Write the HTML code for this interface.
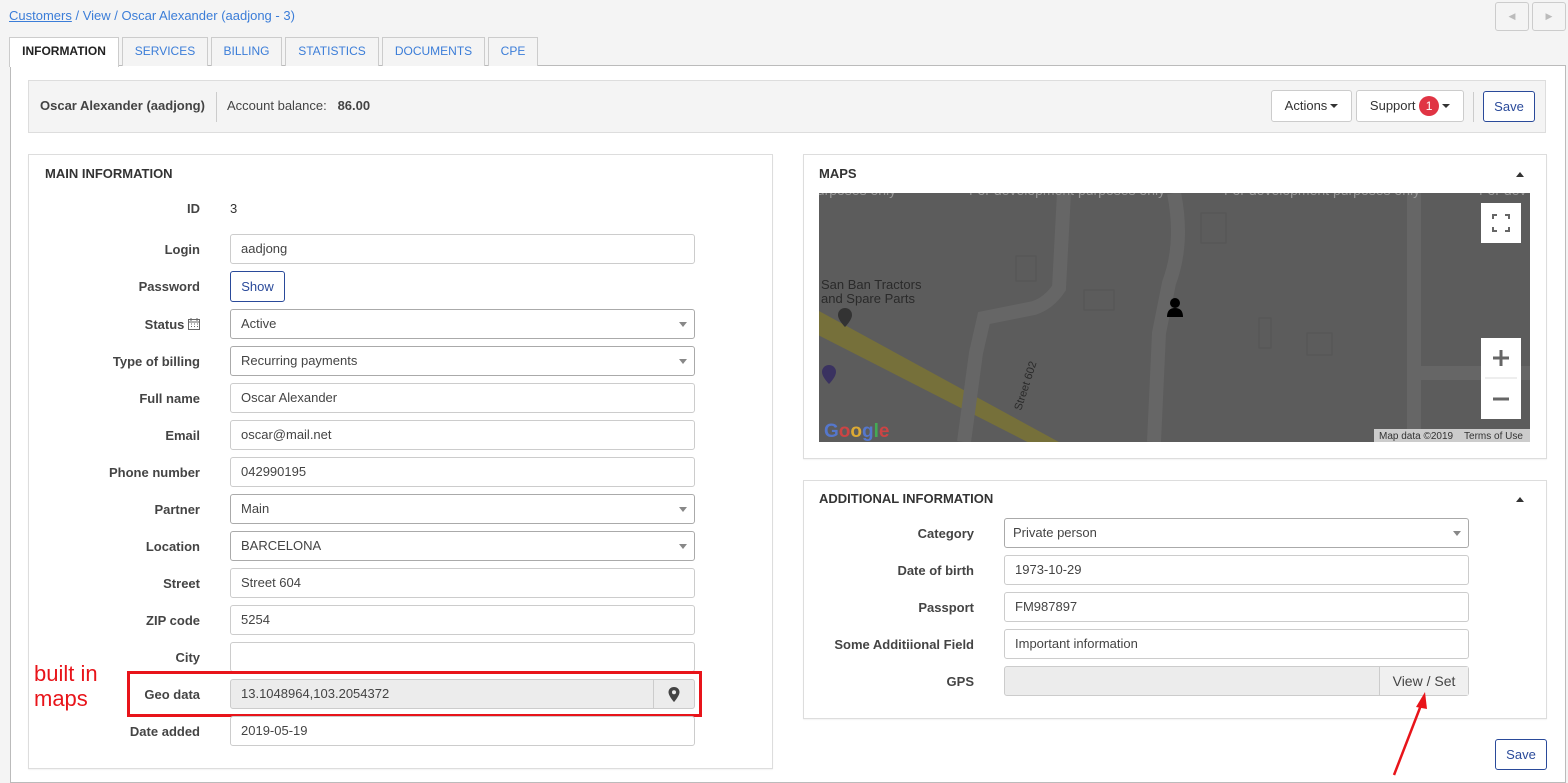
<!DOCTYPE html>
<html><head><meta charset="utf-8"><style>
*{box-sizing:border-box;margin:0;padding:0}
body{width:1568px;height:783px;background:#f4f4f4;font-family:"Liberation Sans",sans-serif;font-size:13px;color:#333;position:relative;overflow:hidden}
.a{position:absolute}
.tab{position:absolute;top:37px;height:29px;border:1px solid #ccc;border-bottom:none;background:#f4f4f4;color:#3b7dd8;font-size:12px;line-height:27px;text-align:center}
.lbl{position:absolute;font-weight:bold;color:#444;text-align:right;width:200px}
.inp{position:absolute;height:30px;border:1px solid #ccc;border-radius:3px;background:#fff;padding-left:10px;line-height:28px;color:#444}
.sel{border-color:#aaa}
.sel:after{content:"";position:absolute;right:7px;top:12px;border:4px solid transparent;border-top:5px solid #888}
.btn{position:absolute;border:1px solid #ccc;border-radius:3px;background:#fff;text-align:center}
.panel{position:absolute;background:#fff;border:1px solid #ddd;box-shadow:0 1px 1px rgba(0,0,0,.05)}
.ph{position:absolute;font-weight:bold;font-size:13px;color:#333}
.caret{display:inline-block;border:4px solid transparent;border-top:4px solid #333;vertical-align:-2px;margin-left:3px}
</style></head><body>
<div class="a" style="left:9px;top:8px;color:#3b7dd8;font-size:13px"><u>Customers</u> / View / Oscar Alexander (aadjong - 3)</div>
<div class="btn" style="left:1495px;top:2px;width:34px;height:29px;background:#f4f4f4;color:#bbb;font-size:9px;line-height:27px">◀</div>
<div class="btn" style="left:1532px;top:2px;width:34px;height:29px;background:#f4f4f4;color:#bbb;font-size:9px;line-height:27px">▶</div>
<div class="a" style="left:10px;top:65px;width:1556px;height:718px;background:#fff;border:1px solid #bbb"></div>
<div class="tab" style="left:9px;width:110px;background:#fff;color:#222;font-weight:bold;height:30px">INFORMATION</div>
<div class="tab" style="left:122px;width:86px">SERVICES</div>
<div class="tab" style="left:211px;width:71px">BILLING</div>
<div class="tab" style="left:285px;width:94px">STATISTICS</div>
<div class="tab" style="left:382px;width:103px">DOCUMENTS</div>
<div class="tab" style="left:488px;width:50px">CPE</div>
<div class="a" style="left:28px;top:80px;width:1518px;height:53px;background:#f4f4f4;border:1px solid #ddd"></div>
<div class="a" style="left:40px;top:98px;font-weight:bold;color:#444">Oscar Alexander (aadjong)</div>
<div class="a" style="left:216px;top:92px;width:1px;height:30px;background:#ccc"></div>
<div class="a" style="left:227px;top:98px;color:#444">Account balance: &nbsp; <b>86.00</b></div>
<div class="btn" style="left:1271px;top:90px;width:81px;height:32px;line-height:30px">Actions<span class="caret"></span></div>
<div class="btn" style="left:1356px;top:90px;width:108px;height:32px;line-height:30px">Support <span style="display:inline-block;width:20px;height:20px;border-radius:10px;background:#e03444;color:#fff;line-height:20px;font-size:12px">1</span><span class="caret"></span></div>
<div class="a" style="left:1473px;top:92px;width:1px;height:30px;background:#ccc"></div>
<div class="btn" style="left:1483px;top:91px;width:52px;height:31px;line-height:29px;border-color:#2a4a9a;color:#2a4a9a">Save</div>

<div class="panel" style="left:28px;top:154px;width:745px;height:615px"></div>
<div class="ph" style="left:45px;top:166px">MAIN INFORMATION</div>
<div class="lbl" style="top:201px">ID</div><div class="a" style="left:230px;top:201px">3</div>
<div class="lbl" style="top:242px">Login</div><div class="inp" style="left:230px;top:234px;width:465px">aadjong</div>
<div class="lbl" style="top:279px">Password</div><div class="btn" style="left:230px;top:271px;width:55px;height:31px;line-height:29px;border-color:#2a4a9a;color:#2a4a9a">Show</div>
<div class="lbl" style="top:317px">Status <svg width="12" height="12" viewBox="0 0 12 12" style="vertical-align:-1px"><rect x="0.5" y="1.5" width="11" height="10" fill="none" stroke="#666"/><path d="M0.5 4h11M3 0v3M9 0v3M3 6h1M6 6h1M9 6h1M3 8.5h1M6 8.5h1M9 8.5h1" stroke="#666"/></svg></div><div class="inp sel" style="left:230px;top:309px;width:465px">Active</div>
<div class="lbl" style="top:354px">Type of billing</div><div class="inp sel" style="left:230px;top:346px;width:465px">Recurring payments</div>
<div class="lbl" style="top:391px">Full name</div><div class="inp" style="left:230px;top:383px;width:465px">Oscar Alexander</div>
<div class="lbl" style="top:428px">Email</div><div class="inp" style="left:230px;top:420px;width:465px">oscar@mail.net</div>
<div class="lbl" style="top:465px">Phone number</div><div class="inp" style="left:230px;top:457px;width:465px">042990195</div>
<div class="lbl" style="top:502px">Partner</div><div class="inp sel" style="left:230px;top:494px;width:465px">Main</div>
<div class="lbl" style="top:539px">Location</div><div class="inp sel" style="left:230px;top:531px;width:465px">BARCELONA</div>
<div class="lbl" style="top:576px">Street</div><div class="inp" style="left:230px;top:568px;width:465px">Street 604</div>
<div class="lbl" style="top:613px">ZIP code</div><div class="inp" style="left:230px;top:605px;width:465px">5254</div>
<div class="lbl" style="top:650px">City</div><div class="inp" style="left:230px;top:642px;width:465px"></div>
<div class="lbl" style="top:687px">Geo data</div><div class="inp" style="left:230px;top:679px;width:465px;background:#ececec">13.1048964,103.2054372</div>
<div class="a" style="left:653px;top:680px;width:1px;height:28px;background:#ccc"></div>
<svg class="a" style="left:668px;top:687px" width="12" height="15" viewBox="0 0 12 15"><path d="M6 0C2.7 0 .5 2.3.5 5.2 .5 8.7 6 15 6 15s5.5-6.3 5.5-9.8C11.5 2.3 9.3 0 6 0z" fill="#444"/><circle cx="6" cy="5.2" r="2" fill="#ececec"/></svg>
<div class="a" style="left:127px;top:671px;width:575px;height:46px;border:3px solid #e8141a"></div>
<div class="a" style="left:34px;top:661px;color:#e8141a;font-size:22px;line-height:25px">built in<br>maps</div>
<div class="lbl" style="top:724px">Date added</div><div class="inp" style="left:230px;top:716px;width:465px">2019-05-19</div>

<div class="panel" style="left:803px;top:154px;width:744px;height:305px"></div>
<div class="ph" style="left:819px;top:166px">MAPS</div>
<div class="a" style="left:1516px;top:172px;border:4px solid transparent;border-bottom:5px solid #333;border-top:none"></div>
<div class="a" style="left:819px;top:193px;width:711px;height:249px;background:#5c5c5c;overflow:hidden">
<svg width="711" height="249" style="position:absolute;left:0;top:0">
<path d="M-5 140 L230 260 L260 260 L0 118Z" fill="#76703a"/>
<path d="M245 0 L240 95 Q230 110 215 115 L165 125 L157 160 L145 249" stroke="#666" stroke-width="14" fill="none"/>
<path d="M355 0 Q365 50 350 90 L340 140 L335 249" stroke="#666" stroke-width="14" fill="none"/>
<path d="M595 0 L595 249 M600 180 L711 180" stroke="#666" stroke-width="14" fill="none"/>
<g fill="none" stroke="#555"><rect x="197" y="63" width="20" height="25"/><rect x="265" y="97" width="30" height="20"/><rect x="440" y="125" width="12" height="30"/><rect x="488" y="140" width="25" height="22"/><rect x="382" y="20" width="25" height="30"/></g>
<text x="-10" y="2" fill="#999" font-size="14" font-family="Liberation Sans">purposes only</text>
<text x="150" y="2" fill="#999" font-size="14" font-family="Liberation Sans">For development purposes only</text>
<text x="405" y="2" fill="#999" font-size="14" font-family="Liberation Sans">For development purposes only</text>
<text x="660" y="2" fill="#999" font-size="14" font-family="Liberation Sans">For dev</text>
<text x="2" y="96" fill="#2a2a2a" font-size="13" font-family="Liberation Sans">San Ban Tractors</text>
<text x="2" y="110" fill="#2a2a2a" font-size="13" font-family="Liberation Sans">and Spare Parts</text>
<text x="0" y="0" fill="#2a2a2a" font-size="11" font-family="Liberation Sans" transform="translate(202,218) rotate(-72)">Street 602</text>
<path d="M26 115 a7 7 0 0 0-7 7 c0 5 7 12 7 12 s7-7 7-12 a7 7 0 0 0-7-7z" fill="#333"/>
<path d="M10 172 a7 7 0 0 0-7 7 c0 5 7 12 7 12 s7-7 7-12 a7 7 0 0 0-7-7z" fill="#3a3260"/>
<circle cx="356" cy="110" r="5" fill="#000"/><path d="M348 124 q0-9 8-9 q8 0 8 9z" fill="#000"/>
<text x="5" y="244" font-size="19" font-weight="bold" font-family="Liberation Sans" fill="#5577cc">G<tspan fill="#cc4444">o</tspan><tspan fill="#ddaa33">o</tspan>g<tspan fill="#44aa55">l</tspan><tspan fill="#cc4444">e</tspan></text>
<rect x="555" y="236" width="156" height="13" fill="#ccc"/>
<text x="560" y="246" font-size="10" font-family="Liberation Sans" fill="#333">Map data ©2019 &#160;&#160; Terms of Use</text>
<rect x="662" y="10" width="40" height="40" fill="#fff"/>
<path d="M674 26v-4h4M686 22h4v4M690 34v4h-4M678 38h-4v-4" stroke="#666" stroke-width="2" fill="none"/>
<rect x="662" y="145" width="40" height="81" fill="#fff"/>
<path d="M682 157v16M674 165h16M674 206h16" stroke="#666" stroke-width="3"/>
<path d="M666 185h32" stroke="#ddd"/>
</svg></div>

<div class="panel" style="left:803px;top:480px;width:744px;height:239px"></div>
<div class="ph" style="left:819px;top:491px">ADDITIONAL INFORMATION</div>
<div class="a" style="left:1516px;top:497px;border:4px solid transparent;border-bottom:5px solid #333;border-top:none"></div>
<div class="lbl" style="left:774px;top:526px">Category</div><div class="inp sel" style="left:1004px;top:518px;width:465px;padding-left:8px">Private person</div>
<div class="lbl" style="left:774px;top:563px">Date of birth</div><div class="inp" style="left:1004px;top:555px;width:465px">1973-10-29</div>
<div class="lbl" style="left:774px;top:600px">Passport</div><div class="inp" style="left:1004px;top:592px;width:465px">FM987897</div>
<div class="lbl" style="left:774px;top:637px">Some Additiional Field</div><div class="inp" style="left:1004px;top:629px;width:465px">Important information</div>
<div class="lbl" style="left:774px;top:674px">GPS</div><div class="inp" style="left:1004px;top:666px;width:465px;background:#ececec"></div>
<div class="a" style="left:1379px;top:667px;width:89px;height:28px;border-left:1px solid #ccc;background:#f0f0f0;text-align:center;line-height:28px;font-size:14px;color:#444">View / Set</div>
<div class="btn" style="left:1495px;top:739px;width:52px;height:31px;line-height:29px;border-color:#2a4a9a;color:#2a4a9a">Save</div>
<svg class="a" style="left:1385px;top:690px" width="50" height="90"><path d="M9 85 L38 10" stroke="#e8141a" stroke-width="2.5"/><path d="M40 2 L31 17 L42 19Z" fill="#e8141a"/></svg>
</body></html>
